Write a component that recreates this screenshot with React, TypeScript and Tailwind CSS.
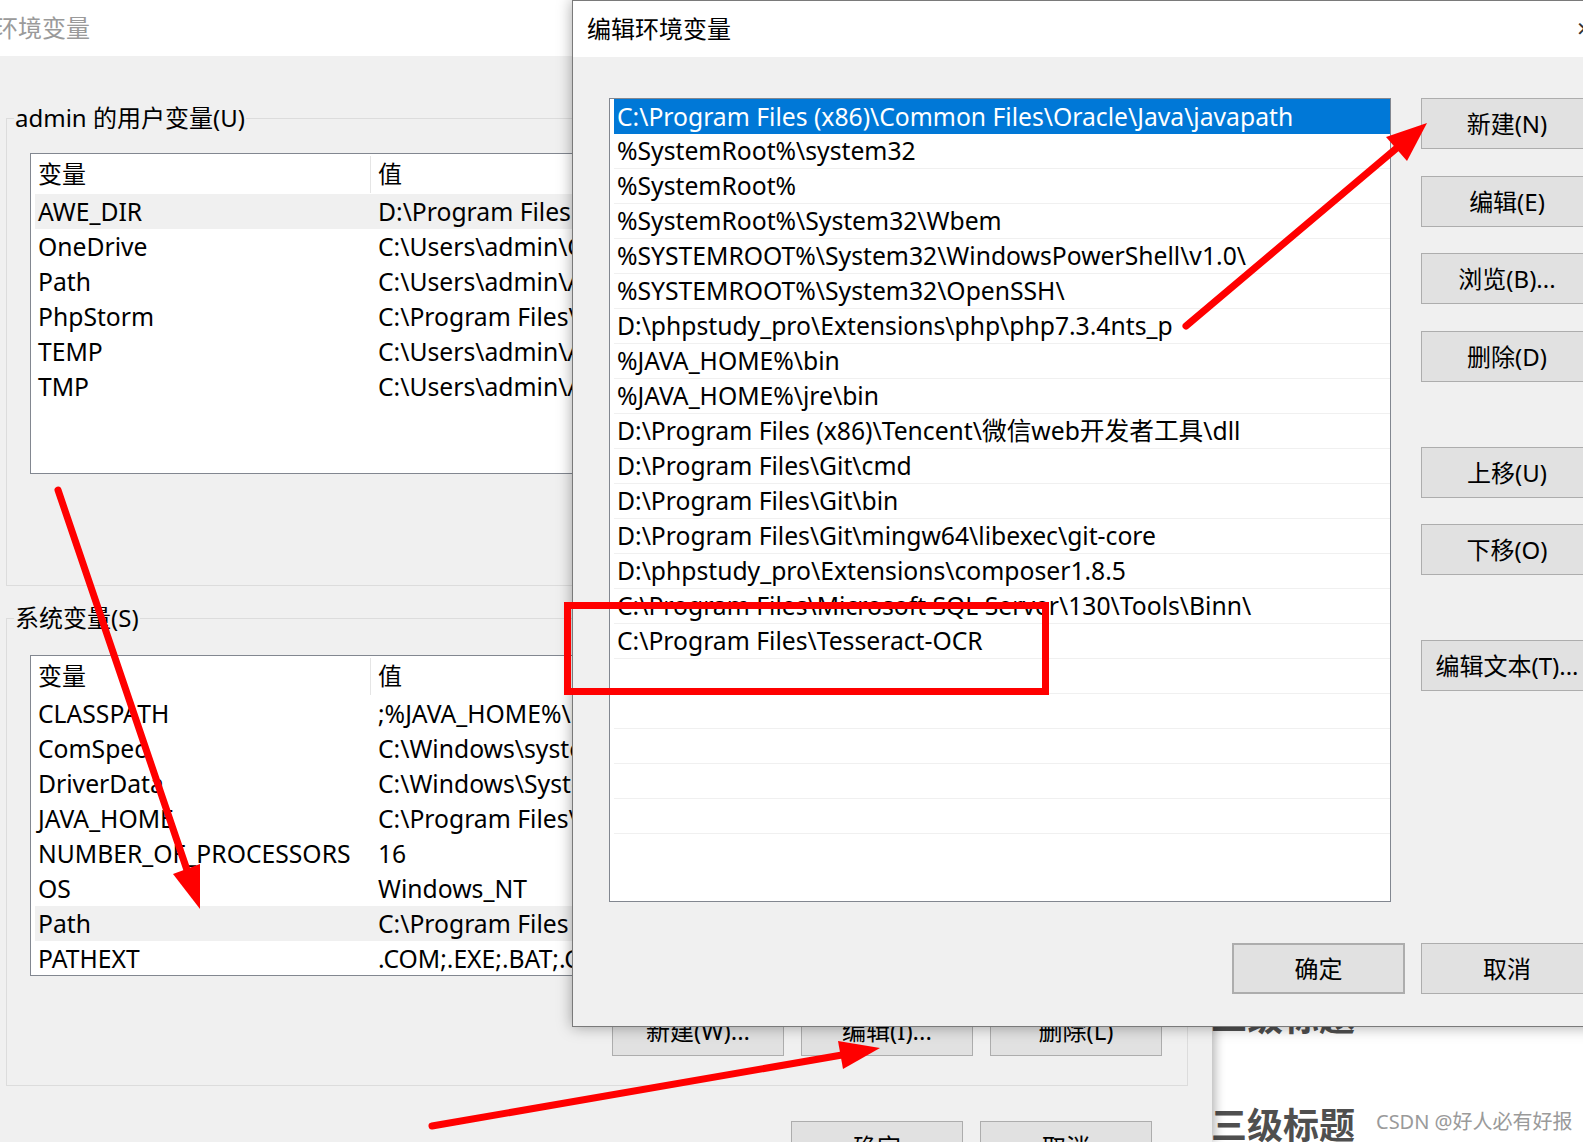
import React from "react";

const userVars: [string, string][] = [
  ["AWE_DIR", "D:\\Program Files (x86)\\AWE"],
  ["OneDrive", "C:\\Users\\admin\\OneDrive"],
  ["Path", "C:\\Users\\admin\\AppData\\Local\\Microsoft\\WindowsApps"],
  ["PhpStorm", "C:\\Program Files\\JetBrains\\PhpStorm\\bin"],
  ["TEMP", "C:\\Users\\admin\\AppData\\Local\\Temp"],
  ["TMP", "C:\\Users\\admin\\AppData\\Local\\Temp"],
];

const sysVars: [string, string][] = [
  ["CLASSPATH", ";%JAVA_HOME%\\lib;%JAVA_HOME%\\lib\\tools.jar"],
  ["ComSpec", "C:\\Windows\\system32\\cmd.exe"],
  ["DriverData", "C:\\Windows\\System32\\Drivers\\DriverData"],
  ["JAVA_HOME", "C:\\Program Files\\Java\\jdk1.8.0"],
  ["NUMBER_OF_PROCESSORS", "16"],
  ["OS", "Windows_NT"],
  ["Path", "C:\\Program Files (x86)\\Common Files\\Oracle"],
  ["PATHEXT", ".COM;.EXE;.BAT;.CMD;.VBS;.VBE;.JS"],
];

const paths = [
  "C:\\Program Files (x86)\\Common Files\\Oracle\\Java\\javapath",
  "%SystemRoot%\\system32",
  "%SystemRoot%",
  "%SystemRoot%\\System32\\Wbem",
  "%SYSTEMROOT%\\System32\\WindowsPowerShell\\v1.0\\",
  "%SYSTEMROOT%\\System32\\OpenSSH\\",
  "D:\\phpstudy_pro\\Extensions\\php\\php7.3.4nts_p",
  "%JAVA_HOME%\\bin",
  "%JAVA_HOME%\\jre\\bin",
  "D:\\Program Files (x86)\\Tencent\\微信web开发者工具\\dll",
  "D:\\Program Files\\Git\\cmd",
  "D:\\Program Files\\Git\\bin",
  "D:\\Program Files\\Git\\mingw64\\libexec\\git-core",
  "D:\\phpstudy_pro\\Extensions\\composer1.8.5",
  "C:\\Program Files\\Microsoft SQL Server\\130\\Tools\\Binn\\",
  "C:\\Program Files\\Tesseract-OCR",
  "", "", "", "", "",
];

const Btn = ({ label, className = "" }: { label: string; className?: string }) => (
  <div
    className={
      "h-[51px] w-[172px] shrink-0 flex items-center justify-center bg-[#e1e1e1] border border-[#adadad] text-[24px] text-black whitespace-nowrap " +
      className
    }
  >
    {label}
  </div>
);

const VarList = ({ rows, hl }: { rows: [string, string][]; hl: number }) => (
  <div className="w-[1132px] h-[321px] bg-white border border-[#828790] pl-[4px] overflow-hidden">
    <div className="h-[40px] flex items-center text-[24px]">
      <div className="w-[335px] pl-[3px]">变量</div>
      <div className="h-[37px] w-px bg-[#e5e5e5]" />
      <div className="pl-[7px]">值</div>
    </div>
    {rows.map(([k, v], i) => (
      <div
        key={k}
        className={"h-[35px] flex items-center whitespace-nowrap text-[24.7px] " + (i === hl ? "bg-[#f0f0f0]" : "")}
      >
        <div className="w-[336px] pl-[3px]">{k}</div>
        <div className="pl-[7px]">{v}</div>
      </div>
    ))}
  </div>
);

const Group = ({ label, top, children }: { label: string; top: string; children: React.ReactNode }) => (
  <div className={"shrink-0 ml-[6px] w-[1182px] h-[468px] border border-[#dcdcdc] pl-[23px] " + top}>
    <div className="-mt-[17px] -ml-[16px] w-fit px-[1px] bg-[#f0f0f0] leading-[32px]">{label}</div>
    {children}
  </div>
);

export default function App() {
  return (
    <div className="relative w-[1583px] h-[1142px] overflow-hidden flex bg-white text-black text-[24px] font-['Noto_Sans','Noto_Sans_CJK_SC',sans-serif]">
      {/* 环境变量 (background window) */}
      <div className="relative z-10 w-[1212px] shrink-0 flex flex-col bg-[#f0f0f0] shadow-[3px_0_10px_rgba(0,0,0,0.3)]">
        <div className="h-[56px] shrink-0 bg-white flex items-center">
          <span className="-ml-[6px] text-[#9a9a9a]">环境变量</span>
        </div>

        <Group label="admin 的用户变量(U)" top="mt-[62px]">
          <div className="mt-[19px]">
            <VarList rows={userVars} hl={0} />
          </div>
          <div className="mt-[16px] w-[1132px] flex justify-end gap-[17px]">
            <Btn label="新建(N)..." />
            <Btn label="编辑(E)..." />
            <Btn label="删除(D)" />
          </div>
        </Group>

        <Group label="系统变量(S)" top="mt-[32px]">
          <div className="mt-[21px]">
            <VarList rows={sysVars} hl={6} />
          </div>
          <div className="mt-[29px] w-[1132px] flex justify-end gap-[17px]">
            <Btn label="新建(W)..." />
            <Btn label="编辑(I)..." />
            <Btn label="删除(L)" />
          </div>
        </Group>

        <div className="shrink-0 mt-[35px] flex justify-end gap-[17px] pr-[60px]">
          <Btn label="确定" />
          <Btn label="取消" />
        </div>
      </div>

      {/* CSDN page behind */}
      <div className="flex-1 bg-white flex flex-col pt-[996px] gap-[64px] text-[36px] leading-[44px] font-bold text-[#4f4f4f] whitespace-nowrap -ml-px">
        <div>二级标题</div>
        <div>三级标题</div>
      </div>
      <div className="absolute z-10 left-[1376px] top-[1108px] text-[20px] leading-[28px] text-[#9a9a9a] whitespace-nowrap">
        CSDN @好人必有好报
      </div>

      {/* 编辑环境变量 dialog */}
      <div className="absolute z-20 left-[572px] top-0 w-[1028px] h-[1027px] flex flex-col border border-[#7a7a7a] bg-[#f0f0f0] shadow-[0_0_14px_rgba(0,0,0,0.35)]">
        <div className="h-[56px] shrink-0 bg-white flex items-center pl-[14px] pr-[6px]">
          <span>编辑环境变量</span>
          <span className="ml-auto text-[20px] text-[#333]">✕</span>
        </div>
        <div className="flex pl-[36px] pr-[6px] pt-[41px] gap-[30px]">
          <div className="w-[782px] h-[804px] bg-white border border-[#828790] pl-[4px] overflow-hidden">
            {paths.map((p, i) => (
              <div
                key={i}
                className={
                  "h-[35px] flex items-center pl-[3px] whitespace-nowrap text-[24.7px] " +
                  (i === 0 ? "bg-[#0078d7] text-white" : "border-b border-[#f0f0f0]")
                }
              >
                {p}
              </div>
            ))}
          </div>
          <div className="flex flex-col">
            <Btn label="新建(N)" />
            <Btn label="编辑(E)" className="mt-[27px]" />
            <Btn label="浏览(B)..." className="mt-[26px]" />
            <Btn label="删除(D)" className="mt-[27px]" />
            <Btn label="上移(U)" className="mt-[65px]" />
            <Btn label="下移(O)" className="mt-[26px]" />
            <Btn label="编辑文本(T)..." className="mt-[65px]" />
          </div>
        </div>
        <div className="flex justify-end gap-[16px] pr-[6px] pt-[41px]">
          <Btn label="确定" className="w-[173px] border-2 border-[#0078d7]" />
          <Btn label="取消" />
        </div>
      </div>

      {/* red annotations */}
      <svg className="absolute inset-0 z-30 pointer-events-none" width="1583" height="1142" viewBox="0 0 1583 1142">
        <g stroke="#ff0000" strokeWidth="7" strokeLinecap="round" fill="none">
          <line x1="1186" y1="326" x2="1398" y2="147" />
          <line x1="58" y1="490" x2="187" y2="870" />
          <line x1="432" y1="1126" x2="842" y2="1055" />
          <rect x="567.5" y="605.5" width="478" height="86" strokeLinecap="butt" />
        </g>
        <g fill="#ff0000">
          <polygon points="1427,123 1407,161 1386,137" />
          <polygon points="200,909 200,864 173,874" />
          <polygon points="880,1048 843,1069 838,1041" />
        </g>
      </svg>
    </div>
  );
}
